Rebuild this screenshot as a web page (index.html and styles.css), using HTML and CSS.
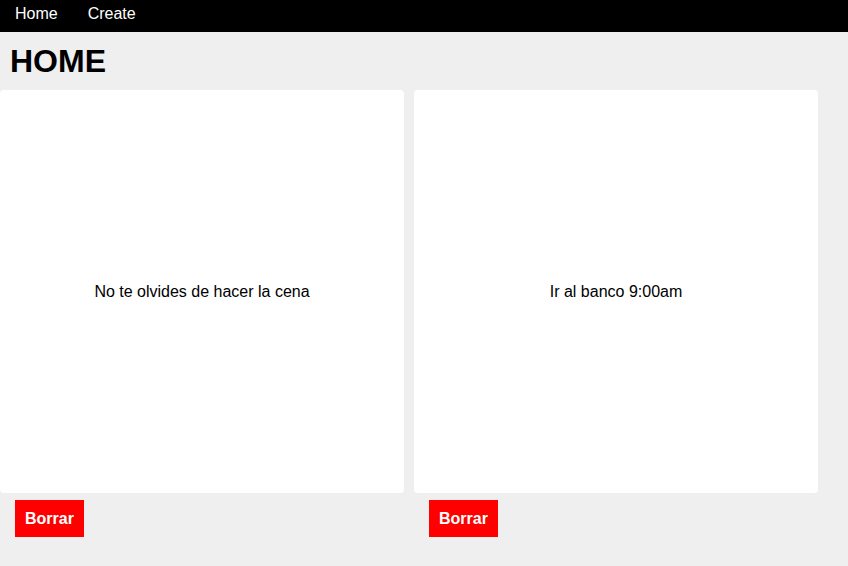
FILE: index.html
```html
<!DOCTYPE html>
<html lang="es">
<head>
<meta charset="utf-8">
<title>Home</title>
<link rel="stylesheet" href="styles.css">
</head>
<body>
<nav class="nav">
  <a class="nav-link" href="#">Home</a>
  <a class="nav-link" href="#">Create</a>
</nav>
<h1 class="title">HOME</h1>
<div class="notes">
  <div class="note">
    <div class="card">No te olvides de hacer la cena</div>
    <button class="delete">Borrar</button>
  </div>
  <div class="note">
    <div class="card">Ir al banco 9:00am</div>
    <button class="delete">Borrar</button>
  </div>
</div>
</body>
</html>
```
FILE: styles.css
```css
html, body {
  margin: 0;
  padding: 0;
}
body {
  background: #efefef;
  font-family: "Liberation Sans", Arial, sans-serif;
  font-size: 16px;
  color: #000;
}
.nav {
  display: flex;
  align-items: flex-start;
  height: 32px;
  box-sizing: border-box;
  background: #000;
}
.nav-link {
  color: #fff;
  text-decoration: none;
  padding: 5px 15px 0 15px;
}
.title {
  margin: 11px 0 10px 10px;
  font-size: 32px;
  font-weight: bold;
  line-height: normal;
}
.notes {
  display: flex;
  gap: 10px;
}
.note {
  display: flex;
  flex-direction: column;
  align-items: flex-start;
}
.card {
  width: 404px;
  height: 403px;
  background: #fff;
  border-radius: 4px;
  display: flex;
  align-items: center;
  justify-content: center;
}
.delete {
  margin: 7px 0 0 15px;
  height: 37px;
  padding: 0 10px;
  border: none;
  background: #ff0000;
  color: #fff;
  font-family: "Liberation Sans", Arial, sans-serif;
  font-size: 16px;
  font-weight: bold;
  cursor: pointer;
}
```
